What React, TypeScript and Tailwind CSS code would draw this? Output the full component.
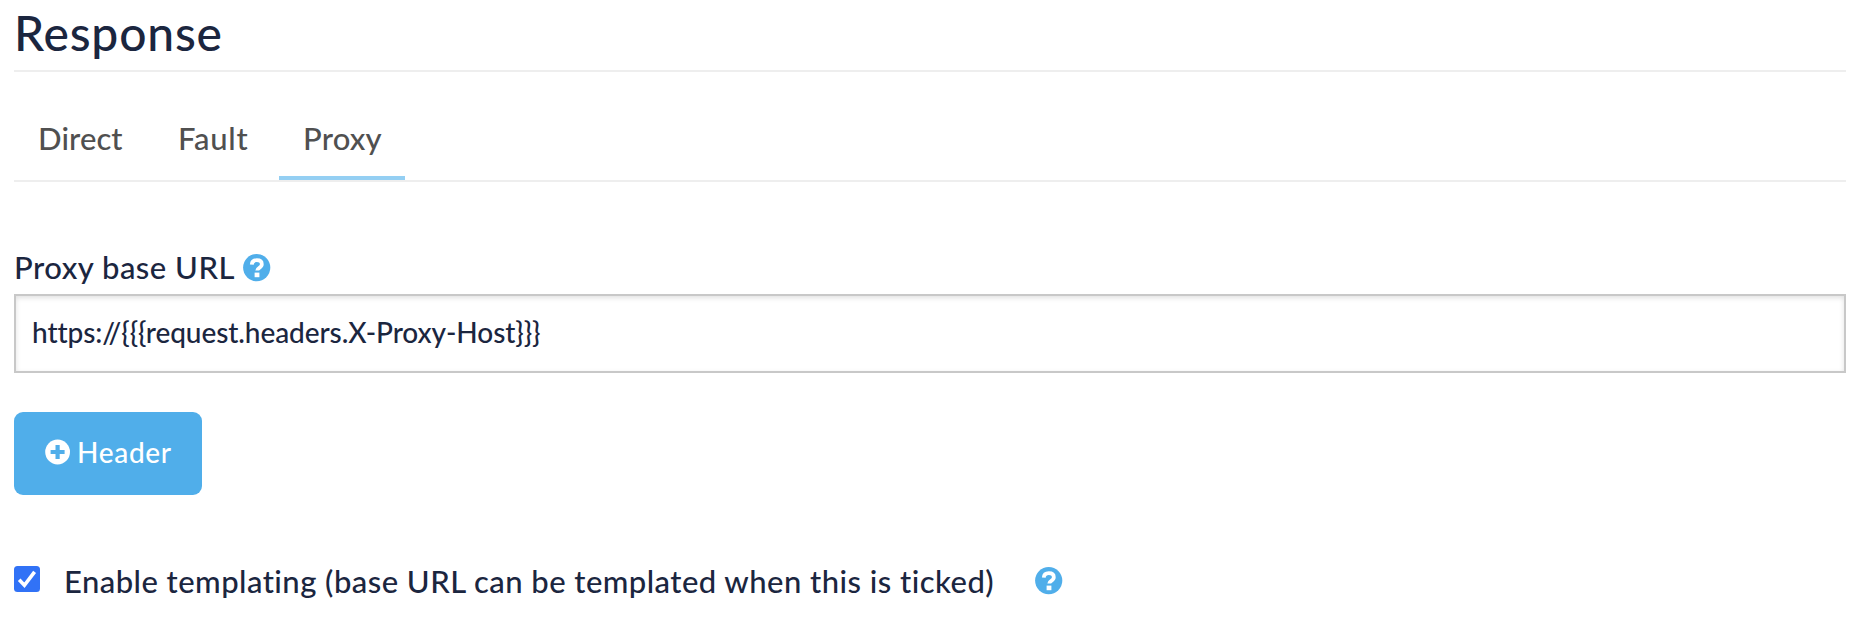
import React from "react";

function HelpIcon() {
  return (
    <svg viewBox="0 0 28 28" className="block size-[28px] shrink-0" aria-hidden="true">
      <circle cx="13.7" cy="13.6" r="13.6" fill="#50aeea" />
      <path d="M8.8 10.6C9 7.4 10.9 6.2 13.8 6.2c3.1 0 5 1.5 5 4 0 3.9-4.6 3.3-4.6 6.4" fill="none" stroke="#fff" strokeWidth="3.8" />
      <rect x="11.6" y="18.6" width="4.8" height="4.6" fill="#fff" />
    </svg>
  );
}

function PlusIcon() {
  return (
    <svg viewBox="0 0 26 26" className="block size-[26px] shrink-0" aria-hidden="true">
      <circle cx="12.6" cy="13" r="12.4" fill="#fff" />
      <path d="M12.6 6v14M5.6 13h14" stroke="#50aeea" strokeWidth="4.2" />
    </svg>
  );
}

function Tab({ active, className, children }: { active?: boolean; className: string; children: string }) {
  return (
    <button
      className={`flex h-[70px] items-start border-b-4 text-left text-[31px] leading-[56px] font-medium whitespace-nowrap text-[#505050] ${active ? "border-[#94cff3]" : "border-transparent"} ${className}`}
    >
      {children}
    </button>
  );
}

export default function App() {
  return (
    <main className="h-[618px] w-full overflow-hidden bg-white pr-[22px] pl-[14px] font-['Lato',sans-serif] text-[#1b263f] [font-variant-ligatures:none]">
      <h1 className="h-[72px] border-b-2 border-[#eeeeee] text-[48px] leading-[65px] font-medium tracking-[0.8px]">Response</h1>
      <nav className="mt-[38px] flex h-[72px] border-b-2 border-[#eeeeee]">
        <Tab className="w-[139px] pl-[24px] tracking-[0.1px]">Direct</Tab>
        <Tab className="w-[126px] pl-[25px] tracking-[0.7px]">Fault</Tab>
        <Tab active className="w-[126px] pl-[24px] tracking-[0.2px]">Proxy</Tab>
      </nav>
      <div className="mt-[66px] flex h-[46px] items-start">
        <label htmlFor="base-url" className="w-[229px] text-[31px] leading-[39px] font-medium tracking-[0.5px] whitespace-nowrap">Proxy base URL</label>
        <div className="mt-[6px]"><HelpIcon /></div>
      </div>
      <input
        id="base-url"
        className="block h-[79px] w-full border-2 border-[#c8c8c8] pb-[3px] pl-[16px] text-[28px] font-medium tracking-[-0.08px] shadow-[inset_0_2px_5px_rgba(0,0,0,0.12)] outline-none"
        defaultValue="https://{{{request.headers.X-Proxy-Host}}}"
      />
      <button className="mt-[39px] flex h-[83px] w-[188px] items-center rounded-[9px] bg-[#50aeea] pb-[3px] pl-[31px] text-[28px] font-medium text-white">
        <PlusIcon />
        <span className="ml-[6px] tracking-[0.7px]">Header</span>
      </button>
      <div className="mt-[61px] flex h-[60px] items-start">
        <input id="templating" type="checkbox" defaultChecked className="peer sr-only" />
        <svg viewBox="0 0 26 26" className="mt-[10px] block size-[26px] shrink-0" aria-hidden="true">
          <rect width="26" height="26" rx="3.5" fill="#3172f6" />
          <path d="M5.2 13.8l5.2 5.5L20.6 5.8" fill="none" stroke="#fff" strokeWidth="3.6" />
        </svg>
        <label htmlFor="templating" className="ml-[24px] w-[971px] text-[31px] leading-[50px] font-medium tracking-[0.46px] whitespace-nowrap">
          Enable templating (base URL can be templated when this is ticked)
        </label>
        <div className="mt-[11px]"><HelpIcon /></div>
      </div>
    </main>
  );
}
